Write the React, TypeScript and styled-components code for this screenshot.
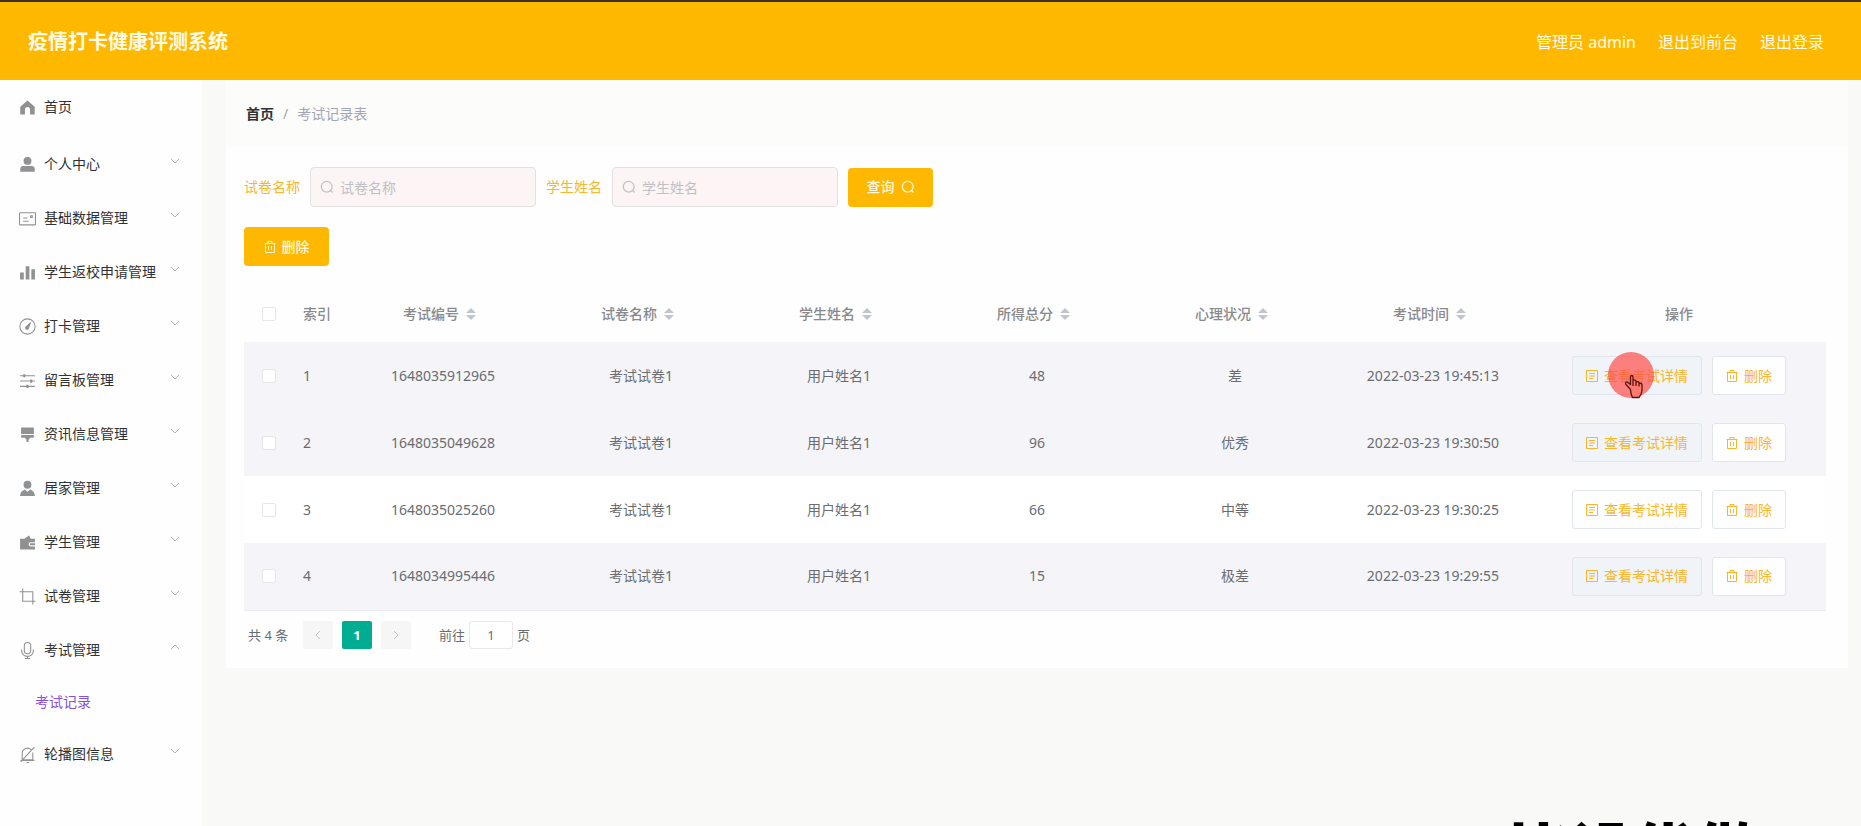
import React from 'react';
import styled, { createGlobalStyle, css } from 'styled-components';

const amber = '#ffb800';
const sans = '"Noto Sans", "Noto Sans CJK SC", sans-serif';

const GlobalStyle = createGlobalStyle`
  *, *::before, *::after { box-sizing: border-box; }
  body {
    margin: 0;
    background: #f9f9f8;
    color: #6a6c70;
    font-family: ${sans};
    font-size: 14px;
    line-height: 20px;
  }
  button, input { font: inherit; color: inherit; margin: 0; }
  a { color: inherit; text-decoration: none; }
  ul { list-style: none; margin: 0; padding: 0; }
`;

/* ---------- shell ---------- */

const Page = styled.div`
  display: flex;
  flex-direction: column;
  min-height: 100vh;
`;

const Header = styled.header`
  display: flex;
  align-items: center;
  justify-content: space-between;
  height: 80px;
  padding: 1px 37px 0 28px;
  border-top: 2px solid #3a2f24;
  background: ${amber};
  color: #fffbe8;
`;

const Title = styled.h1`
  margin: 0;
  font-size: 20px;
  line-height: 28px;
  font-weight: 700;
`;

const HeaderNav = styled.nav`
  display: flex;
  gap: 22px;
  font-size: 16px;
  line-height: 24px;
`;

const Body = styled.div`
  display: flex;
  flex: 1;
`;

const Sidebar = styled.nav`
  flex: none;
  width: 202px;
  background: #fefefe;
`;

const MenuItem = styled.li<{ $home?: boolean }>`
  margin-bottom: ${(p) => (p.$home ? '3px' : '0')};
`;

const MenuLink = styled.a`
  display: flex;
  align-items: center;
  height: 54px;
  padding: 0 22px 0 19px;
  gap: 8px;
  color: #303133;

  svg { flex: none; }
`;

const MenuText = styled.span`
  flex: 1;
  white-space: nowrap;
`;

const Arrow = styled.svg`
  margin-bottom: 6px;
`;

const SubLink = styled.a`
  display: flex;
  align-items: center;
  height: 50px;
  padding-left: 35px;
  color: #8a4fd8;
`;

const Main = styled.main`
  flex: 1;
  min-width: 0;
  padding: 0 13px 0 24px;
`;

const Breadcrumb = styled.nav`
  display: flex;
  align-items: center;
  gap: 9px;
  height: 67px;
  padding-left: 20px;
  background: #fcfcfa;
  color: #a3a5b3;
`;

const CrumbHome = styled.a`
  color: #303133;
  font-weight: 700;
`;

const Card = styled.section`
  padding: 20px 22px 14px 18px;
  background: #fefefe;
`;

/* ---------- search form ---------- */

const SearchForm = styled.form`
  display: flex;
  align-items: center;
  gap: 10px;
  margin-bottom: 20px;
`;

const FieldLabel = styled.label`
  color: #f8b62a;
`;

const InputWrap = styled.div`
  position: relative;
  width: 226px;

  svg {
    position: absolute;
    left: 10px;
    top: 13px;
  }
`;

const TextInput = styled.input`
  display: block;
  width: 100%;
  height: 40px;
  padding: 0 12px 0 29px;
  border: 1px solid #e3e2e2;
  border-radius: 4px;
  background: #fdf5f5;
  outline: none;

  &::placeholder { color: #c0c0c4; opacity: 1; }
`;

const Button = styled.button<{ $variant: 'solid' | 'plain'; $tint?: boolean }>`
  display: inline-flex;
  align-items: center;
  justify-content: center;
  gap: 6px;
  height: 39px;
  border-radius: 4px;
  cursor: pointer;
  white-space: nowrap;

  ${(p) =>
    p.$variant === 'solid'
      ? css`
          width: 85px;
          padding: 0;
          border: 0;
          background: ${amber};
          color: #fff6dc;
          font-weight: 500;
        `
      : css`
          padding: 0 13px;
          border: 1px solid #e0e5ee;
          border-radius: 3px;
          background: ${p.$tint ? '#f0f3f8' : '#fefefe'};
          color: #f9b62c;
        `}
`;

/* ---------- table ---------- */

const Table = styled.table`
  width: 100%;
  margin-top: 20px;
  border-collapse: collapse;
  table-layout: fixed;
`;

const HeadCell = styled.th<{ $left?: boolean }>`
  height: 56px;
  padding: 0 10px;
  color: #88898d;
  font-weight: 500;
  text-align: ${(p) => (p.$left ? 'left' : 'center')};
`;

const Row = styled.tr<{ $shaded: boolean }>`
  background: ${(p) => (p.$shaded ? '#f5f5f9' : '#ffffff')};

  &:last-child { border-bottom: 1px solid #ebebf0; }
`;

const Cell = styled.td<{ $left?: boolean }>`
  height: 67px;
  padding: 0 10px;
  text-align: ${(p) => (p.$left ? 'left' : 'center')};
`;

const SortHead = styled.span`
  display: inline-flex;
  align-items: center;
`;

const SortButton = styled.button`
  display: inline-flex;
  align-items: center;
  justify-content: center;
  width: 24px;
  height: 20px;
  padding: 0;
  border: 0;
  background: none;
`;

const Checkbox = styled.input`
  appearance: none;
  display: block;
  width: 14px;
  height: 14px;
  margin: 0 auto;
  border: 1px solid #e6e6ea;
  border-radius: 2px;
  background: #fff;
`;

const Actions = styled.div`
  display: flex;
  justify-content: center;
  gap: 10px;
`;

const PointerAnchor = styled.span`
  position: relative;
  display: inline-flex;
`;

const PointerMark = styled.svg`
  position: absolute;
  left: 35px;
  top: -4px;
  pointer-events: none;
`;

/* ---------- pagination ---------- */

const Pagination = styled.nav`
  display: flex;
  align-items: center;
  height: 38px;
  margin-top: 5px;
  padding-left: 4px;
  font-size: 13px;
`;

const PageButton = styled.button<{ $active?: boolean }>`
  display: flex;
  align-items: center;
  justify-content: center;
  width: 30px;
  height: 28px;
  margin-left: ${(p) => (p.$active ? '9px' : '0')};
  margin-right: ${(p) => (p.$active ? '9px' : '0')};
  padding: 0;
  border: 0;
  border-radius: 2px;
  background: ${(p) => (p.$active ? '#00ad92' : '#f6f6f6')};
  color: ${(p) => (p.$active ? '#fff' : '#c0c4cc')};
  font-weight: 700;
`;

const Total = styled.span`
  width: 55px;
`;

const Jump = styled.label`
  display: flex;
  align-items: center;
  gap: 4px;
  margin-left: 28px;
`;

const JumpInput = styled.input`
  width: 44px;
  height: 28px;
  padding: 0;
  border: 1px solid #e8e9ec;
  border-radius: 3px;
  background: #fff;
  text-align: center;
`;

const Banner = styled.div`
  position: fixed;
  right: 102px;
  bottom: 0;
  height: 8px;
  overflow: hidden;
  color: #000;
  font-size: 63px;
  line-height: 66px;
  font-weight: 900;
  white-space: nowrap;
`;

/* ---------- icons ---------- */

const solid = { fill: '#909193' };
const line = { fill: 'none', stroke: '#909193', strokeWidth: 1 };

const icons: Record<string, React.ReactNode> = {
  home: <path {...solid} d="M8 1.5 1.2 7.2V14.5H5.6V10a2.4 2.4 0 0 1 4.8 0v4.500h4.400V7.200z" />,
  user: (
    <g {...solid}>
      <circle cx="8" cy="4.600" r="3.700" />
      <path d="M1.200 14.800v-2.300a3 3 0 0 1 3-3h7.600a3 3 0 0 1 3 3v2.300z" />
    </g>
  ),
  postcard: (
    <g {...line}>
      <rect x="0.500" y="2.500" width="15" height="11.500" rx="0.500" />
      <path d="M4 7.500h4M4 10.500h5M11 5.500h1.500v1.500H11z" />
    </g>
  ),
  data: <path {...solid} d="M1 8h3.500v6.500H1zM6.300 2h3.500v12.500H6.300zM11.600 5h3.400v9.500h-3.400z" />,
  odometer: (
    <g {...line}>
      <circle cx="8" cy="8" r="7.200" />
      <path d="M10.800 4.300 9 9.200a1.400 1.400 0 1 1-1.800-1.300z" fill="#909193" />
    </g>
  ),
  operation: (
    <g {...line}>
      <path d="M1 3.500h14M1 8.500h14M1 13.500h14" />
      <path strokeWidth="2" d="M5 2v3M11.500 7v3M8 12v3" />
    </g>
  ),
  platform: <path {...solid} d="M2 1.500h12v6H2zM2 8.500h12V11H10v1.500H9V15H7v-2.500H6V11H2z" />,
  custom: (
    <g {...solid}>
      <circle cx="8" cy="4.500" r="3.700" />
      <path d="M1 15c0-3 2-5.200 4.500-6L8 11l2.500-2C13 9.800 15 12 15 15z" />
    </g>
  ),
  wallet: <path {...solid} d="M1 4.500h4L9.500 1.500l1.500 3h4v3.200h-4a2 2 0 0 0 0 4h4v2.800H1zM11 8.800h4v1.800h-4a.9.9 0 0 1 0-1.800z" />,
  crop: <path {...line} d="M0.500 3.500h12.500v12M3.500 0.500v12H15.500" />,
  microphone: (
    <g {...line}>
      <rect x="5" y="0.500" width="6" height="10.500" rx="3" />
      <path d="M2.500 7v1.500a5.500 5 0 0 0 11 0V7M8 13.500V16M5.500 15.500h5" />
    </g>
  ),
  mute: (
    <g {...line}>
      <path d="M14.500 1 1.500 15M3 12.500V7a5 5 0 0 1 8.500-3.500M13 6v7H4.500M1.500 13.500h13M7 15.500h2.500" />
    </g>
  ),
};

const MenuIcon = ({ name }: { name: string }) => (
  <svg width="17" height="17" viewBox="0 0 16 16" aria-hidden="true">
    {icons[name]}
  </svg>
);

const SearchIcon = ({ color }: { color: string }) => (
  <svg width="14" height="14" viewBox="0 0 14 14" fill="none" stroke={color} strokeWidth="1.300" aria-hidden="true">
    <circle cx="6.700" cy="6.700" r="5.400" />
    <path d="m10.500 10.500 2 2" />
  </svg>
);

const TrashIcon = () => (
  <svg width="12" height="12" viewBox="0 0 12 12" fill="none" stroke="currentColor" aria-hidden="true">
    <path d="M0.500 2.500h11M1.500 2.500v9h9v-9M4 2.500v-2h4v2M4.500 5v4M7.500 5v4" />
  </svg>
);

const DocIcon = () => (
  <svg width="12" height="12" viewBox="0 0 12 12" fill="none" stroke="currentColor" aria-hidden="true">
    <path d="M0.500 0.500h11v11H0.500zM3 3.500h6M3 6h6M3 8.500h4" />
  </svg>
);

const Caret = ({ up }: { up?: boolean }) => (
  <Arrow width="10" height="6" viewBox="0 0 10 6" fill="none" stroke="#b4b6bb" aria-hidden="true">
    <path d={up ? 'M1 5l4-4 4 4' : 'M1 1l4 4 4-4'} />
  </Arrow>
);

const Chevron = ({ next }: { next?: boolean }) => (
  <svg width="6" height="10" viewBox="0 0 6 10" fill="none" stroke="currentColor" aria-hidden="true">
    <path d={next ? 'M1 1l4 4-4 4' : 'M5 1L1 5l4 4'} />
  </svg>
);

const SortIcon = () => (
  <svg width="10" height="12" viewBox="0 0 10 12" fill="#c0c4cc" aria-hidden="true">
    <path d="M5 0l5 5H0zM0 7h10l-5 5z" />
  </svg>
);

const Pointer = () => (
  <PointerMark width="48" height="48" viewBox="0 0 48 48" aria-hidden="true">
    <circle cx="24" cy="23" r="23" fill="#ff4d48" fillOpacity="0.7" />
    <path
      d="M23.500 37.500 19 32.500c-1.500-2 .5-3.200 2-2l2.500 2V25c0-2 2.500-2 2.500 0v5-1c.3-1.500 2.700-1.500 3 0v1.500c.3-1.300 2.600-1.300 3 0V32c.4-1.200 2.700-1 3 .5v6c0 3-1.500 5-3 7h-6.500c-1-2-2-4-2-8M26 30v4M29 30.500v3.500M32 31.500v3"
      fill="#ff7a70"
      stroke="#5a1512"
      strokeWidth="1.300"
      strokeLinejoin="round"
    />
  </PointerMark>
);

/* ---------- data ---------- */

const menu = [
  { icon: 'home', text: '首页' },
  { icon: 'user', text: '个人中心' },
  { icon: 'postcard', text: '基础数据管理' },
  { icon: 'data', text: '学生返校申请管理' },
  { icon: 'odometer', text: '打卡管理' },
  { icon: 'operation', text: '留言板管理' },
  { icon: 'platform', text: '资讯信息管理' },
  { icon: 'custom', text: '居家管理' },
  { icon: 'wallet', text: '学生管理' },
  { icon: 'crop', text: '试卷管理' },
  { icon: 'microphone', text: '考试管理', child: '考试记录' },
  { icon: 'mute', text: '轮播图信息' },
];

const columns = ['考试编号', '试卷名称', '学生姓名', '所得总分', '心理状况', '考试时间'];

const rows = [
  ['1648035912965', '考试试卷1', '用户姓名1', '48', '差', '2022-03-23 19:45:13'],
  ['1648035049628', '考试试卷1', '用户姓名1', '96', '优秀', '2022-03-23 19:30:50'],
  ['1648035025260', '考试试卷1', '用户姓名1', '66', '中等', '2022-03-23 19:30:25'],
  ['1648034995446', '考试试卷1', '用户姓名1', '15', '极差', '2022-03-23 19:29:55'],
];

export default function App() {
  return (
    <Page>
      <GlobalStyle />
      <Header>
        <Title>疫情打卡健康评测系统</Title>
        <HeaderNav>
          <span>管理员 admin</span>
          <a href="#front">退出到前台</a>
          <a href="#logout">退出登录</a>
        </HeaderNav>
      </Header>
      <Body>
        <Sidebar>
          <ul>
            {menu.map((m) => (
              <MenuItem key={m.text} $home={m.icon === 'home'}>
                <MenuLink href="#menu">
                  <MenuIcon name={m.icon} />
                  <MenuText>{m.text}</MenuText>
                  {m.icon !== 'home' && <Caret up={!!m.child} />}
                </MenuLink>
                {m.child && <SubLink href="#records">{m.child}</SubLink>}
              </MenuItem>
            ))}
          </ul>
        </Sidebar>
        <Main>
          <Breadcrumb>
            <CrumbHome href="#home">首页</CrumbHome>
            <span>/</span>
            <span>考试记录表</span>
          </Breadcrumb>
          <Card>
            <SearchForm onSubmit={(e) => e.preventDefault()}>
              <FieldLabel htmlFor="paper">试卷名称</FieldLabel>
              <InputWrap>
                <TextInput id="paper" placeholder="试卷名称" />
                <SearchIcon color="#c4c4c8" />
              </InputWrap>
              <FieldLabel htmlFor="student">学生姓名</FieldLabel>
              <InputWrap>
                <TextInput id="student" placeholder="学生姓名" />
                <SearchIcon color="#c4c4c8" />
              </InputWrap>
              <Button $variant="solid" type="submit">
                查询
                <SearchIcon color="currentColor" />
              </Button>
            </SearchForm>
            <Button $variant="solid" type="button">
              <TrashIcon />
              删除
            </Button>
            <Table>
              <colgroup>
                <col width="49" />
                <col width="51" />
                {columns.map((c) => (
                  <col key={c} />
                ))}
                <col width="294" />
              </colgroup>
              <thead>
                <tr>
                  <HeadCell>
                    <Checkbox type="checkbox" aria-label="全选" />
                  </HeadCell>
                  <HeadCell $left>索引</HeadCell>
                  {columns.map((c) => (
                    <HeadCell key={c}>
                      <SortHead>
                        {c}
                        <SortButton type="button" aria-label={c}>
                          <SortIcon />
                        </SortButton>
                      </SortHead>
                    </HeadCell>
                  ))}
                  <HeadCell>操作</HeadCell>
                </tr>
              </thead>
              <tbody>
                {rows.map((r, i) => (
                  <Row key={r[0]} $shaded={i !== 2}>
                    <Cell>
                      <Checkbox type="checkbox" aria-label={r[0]} />
                    </Cell>
                    <Cell $left>{i + 1}</Cell>
                    {r.map((v, j) => (
                      <Cell key={j}>{v}</Cell>
                    ))}
                    <Cell>
                      <Actions>
                        <PointerAnchor>
                          <Button $variant="plain" $tint={i !== 2} type="button">
                            <DocIcon />
                            查看考试详情
                          </Button>
                          {i === 0 && <Pointer />}
                        </PointerAnchor>
                        <Button $variant="plain" type="button">
                          <TrashIcon />
                          删除
                        </Button>
                      </Actions>
                    </Cell>
                  </Row>
                ))}
              </tbody>
            </Table>
            <Pagination>
              <Total>共 4 条</Total>
              <PageButton type="button" aria-label="上一页">
                <Chevron />
              </PageButton>
              <PageButton type="button" $active>
                1
              </PageButton>
              <PageButton type="button" aria-label="下一页">
                <Chevron next />
              </PageButton>
              <Jump>
                前往
                <JumpInput defaultValue="1" />
                页
              </Jump>
            </Pagination>
          </Card>
        </Main>
      </Body>
      <Banner>毕设优做</Banner>
    </Page>
  );
}
